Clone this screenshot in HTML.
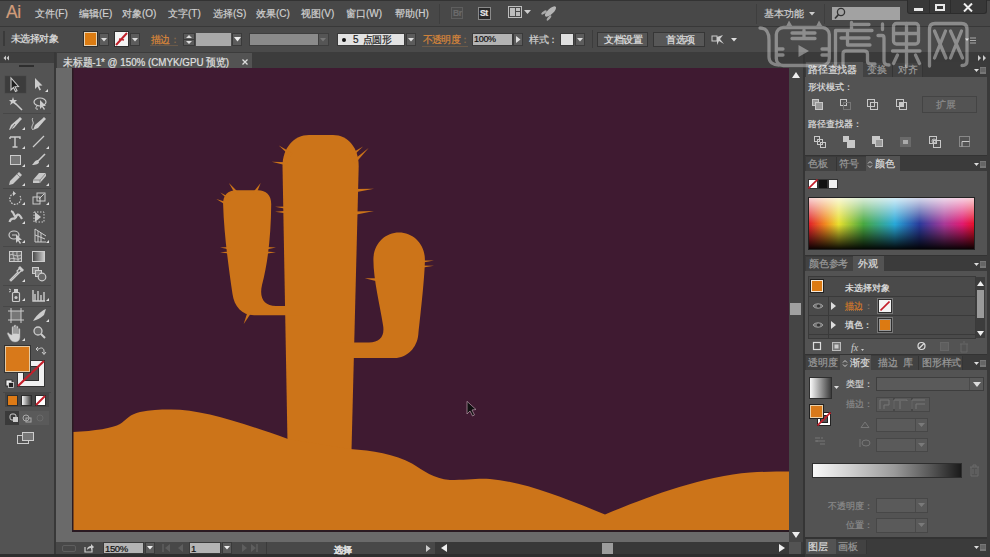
<!DOCTYPE html>
<html><head><meta charset="utf-8">
<style>
*{box-sizing:border-box;margin:0;padding:0}
html,body{width:990px;height:557px;overflow:hidden;background:#3a3a3a;font-family:"Liberation Sans",sans-serif;color:#d8d8d8}
.a{position:absolute}
.t{position:absolute;white-space:nowrap;line-height:1;-webkit-text-stroke-width:0.2px}
</style></head><body>
<!-- top line + menu bar -->
<div class="a" style="left:0;top:0;width:990px;height:1px;background:#333"></div>
<div class="a" style="left:0;top:1px;width:990px;height:25px;background:#484848"></div>
<div class="a" style="left:0;top:26px;width:990px;height:1px;background:#383838"></div>
<!-- control bar -->
<div class="a" style="left:0;top:27px;width:990px;height:25px;background:#4a4a4a"></div>
<!-- tab bar row -->
<div class="a" style="left:0;top:52px;width:990px;height:16px;background:#3c3c3c"></div>
<!-- toolbar -->
<div class="a" style="left:0;top:53px;width:54px;height:504px;background:#535353"></div>
<div class="a" style="left:0;top:53px;width:54px;height:10px;background:#3f3f3f"></div>
<div class="a" style="left:54px;top:52px;width:2px;height:505px;background:#383838"></div>
<!-- canvas -->
<div class="a" style="left:56px;top:68px;width:733px;height:474px;background:#6a6a6a"></div>
<div class="a" style="left:73px;top:68px;width:716px;height:463px;background:#3f1a31"></div>
<!-- canvas art -->
<svg class="a" style="left:0;top:0" width="990" height="557" viewBox="0 0 990 557">
<defs><clipPath id="ab"><rect x="73" y="68" width="716" height="462"/></clipPath></defs>
<g clip-path="url(#ab)" fill="#cc7419">
<path d="M282.5 166 C282.5 148 294 135 309 135 L333 135 C348 135 358.7 148 358.7 166 L351 470 L288 470 Z"/>
<path d="M223.1 204 C223.1 195 228 190.2 236 190.2 L258 190.2 C266 190.2 271.2 195 271.2 204 C271 235 268 262 262 285 C259 298 264 306 276 306 L300 306 L300 315.3 L254 315.3 C242 315.3 234 306 232.5 294 C229 270 224 235 223.1 204 Z"/>
<path d="M373.4 259.5 C373.4 244 385 232.6 399 232.6 C413 232.6 424.9 244 424.9 259.5 C424.9 275 421 310 418.3 334.5 C417 348 407 358 394.6 358 L340 358 L340 342.4 L369 342.4 C380 342.4 385 336 383 325 C380 305 373.4 280 373.4 259.5 Z"/>
<path d="M73 432 C95 431 113 428 120 424 C126 420 130 414 140 412 C150 410 160 409.6 169 409.6 C200 409 240 422 288 439 L350 449 C372 450.5 395 454 412 463.5 C424 471 433 478.5 450 480 C466 480 478 478 490 479 C525 482 562 497 605 514.5 C640 500 700 476 750 472.5 C765 471.5 778 471.5 789 471.5 L789 531 L73 531 Z"/>
<polygon points="228.9,182.9 235.4,194.5 238.2,192.3"/>
<polygon points="260.7,182.9 252.9,192.7 256.1,194.5"/>
<polygon points="220.3,192.6 229.5,201.0 231.4,198.4"/>
<polygon points="216.3,199.0 227.1,205.7 228.4,202.8"/>
<polygon points="220.0,247.5 229.9,249.4 230.1,247.0"/>
<polygon points="220.0,252.3 230.0,253.8 230.0,251.4"/>
<polygon points="276.0,247.5 265.9,247.0 266.1,249.4"/>
<polygon points="276.0,252.3 266.0,251.4 266.0,253.8"/>
<polygon points="243.7,323.9 251.6,312.2 248.0,310.4"/>
<polygon points="278.8,145.6 290.4,156.2 292.5,153.3"/>
<polygon points="271.7,161.8 286.8,165.5 287.2,162.3"/>
<polygon points="275.0,206.8 286.9,209.0 287.1,206.4"/>
<polygon points="275.0,211.7 287.0,213.4 287.0,210.8"/>
<polygon points="363.0,146.5 349.5,154.4 351.7,157.2"/>
<polygon points="368.6,148.0 352.6,160.8 355.1,163.4"/>
<polygon points="374.0,188.7 353.8,189.0 354.2,192.6"/>
<polygon points="374.0,211.0 353.8,211.6 354.2,215.1"/>
<polygon points="434.0,260.4 419.9,260.5 420.1,263.1"/>
<polygon points="434.0,265.8 419.9,265.4 420.1,268.0"/>
<polygon points="364.7,278.3 377.8,281.4 378.2,278.3"/>

</g>
<rect x="72" y="530" width="717" height="2" fill="#2a1a22"/><rect x="72" y="68" width="1.5" height="464" fill="#2a1a22"/>
<path d="M467 401.3 L467 414 L470 411 L472.5 416 L474.5 415 L472 410 L476 409.5 Z" fill="#111" stroke="#a88a9a" stroke-width="0.8"/>
</svg>
<!-- doc tab -->
<div class="a" style="left:57px;top:53px;width:195px;height:15px;background:#535353"></div>
<!-- v scroll -->
<div class="a" style="left:789px;top:68px;width:14px;height:474px;background:#454545"></div>
<div class="a" style="left:803px;top:52px;width:2px;height:505px;background:#353535"></div>
<!-- status bar -->
<div class="a" style="left:56px;top:542px;width:733px;height:12px;background:#484848"></div>
<div class="a" style="left:789px;top:542px;width:12px;height:12px;background:#535353"></div>
<div class="a" style="left:0;top:554px;width:990px;height:3px;background:#2e2e2e"></div>
<!-- right panel -->
<div class="a" style="left:805px;top:52px;width:185px;height:505px;background:#3a3a3a"></div>
<!-- MENU -->
<div class="t" style="left:6px;top:4px;font-size:17.5px;color:#d09c7a;letter-spacing:-0.3px">Ai</div>
<div class="t" style="left:35px;top:9px;font-size:10px;color:#cfcfcf">文件(F)</div>
<div class="t" style="left:79px;top:9px;font-size:10px;color:#cfcfcf">编辑(E)</div>
<div class="t" style="left:122px;top:9px;font-size:10px;color:#cfcfcf">对象(O)</div>
<div class="t" style="left:168px;top:9px;font-size:10px;color:#cfcfcf">文字(T)</div>
<div class="t" style="left:213px;top:9px;font-size:10px;color:#cfcfcf">选择(S)</div>
<div class="t" style="left:256px;top:9px;font-size:10px;color:#cfcfcf">效果(C)</div>
<div class="t" style="left:301px;top:9px;font-size:10px;color:#cfcfcf">视图(V)</div>
<div class="t" style="left:346px;top:9px;font-size:10px;color:#cfcfcf">窗口(W)</div>
<div class="t" style="left:395px;top:9px;font-size:10px;color:#cfcfcf">帮助(H)</div>
<div class="a" style="left:439px;top:4px;width:1px;height:20px;background:#3e3e3e"></div>
<div class="a" style="left:451px;top:7px;width:12px;height:12px;border:1px solid #5e5e5e;background:#4a4a4a"></div>
<div class="t" style="left:453px;top:9px;font-size:8.5px;color:#6a6a6a;font-weight:bold;letter-spacing:-0.3px">Br</div>
<div class="a" style="left:478px;top:7px;width:13px;height:13px;border:1px solid #8a8a8a;background:#2a2a2a"></div>
<div class="t" style="left:480px;top:9px;font-size:8.5px;color:#e8e8e8;font-weight:bold;letter-spacing:-0.3px">St</div>
<div class="a" style="left:508px;top:6px;width:14px;height:12px;border:1px solid #bdbdbd"></div>
<div class="a" style="left:510px;top:8px;width:5px;height:8px;background:#bdbdbd"></div>
<div class="a" style="left:516px;top:8px;width:4px;height:3px;background:#bdbdbd"></div>
<div class="a" style="left:516px;top:12px;width:4px;height:4px;background:#bdbdbd"></div>
<svg class="a" style="left:524px;top:10px" width="7" height="5"><path d="M0 0H7L3.5 4Z" fill="#ccc"/></svg>
<svg class="a" style="left:540px;top:5px" width="17" height="16" viewBox="0 0 17 16"><ellipse cx="10.5" cy="6.5" rx="7" ry="2.8" transform="rotate(-42 10.5 6.5)" fill="#b4b4b4"/><ellipse cx="4" cy="7.5" rx="3.2" ry="1.3" transform="rotate(-35 4 7.5)" fill="#a8a8a8"/><ellipse cx="9" cy="13" rx="3.2" ry="1.3" transform="rotate(-50 9 13)" fill="#a8a8a8"/></svg>
<div class="a" style="left:756px;top:4px;width:1px;height:20px;background:#3e3e3e"></div>
<div class="t" style="left:764px;top:9px;font-size:10px;color:#cfcfcf">基本功能</div>
<svg class="a" style="left:809px;top:12px" width="6" height="4"><path d="M0 0H6L3 3.5Z" fill="#ccc"/></svg>
<div class="a" style="left:824px;top:4px;width:1px;height:20px;background:#3e3e3e"></div>
<div class="a" style="left:832px;top:7px;width:68px;height:13px;background:#a2a2a2"></div>
<svg class="a" style="left:834px;top:7px" width="12" height="13" viewBox="0 0 12 13"><circle cx="7" cy="5" r="3.6" fill="none" stroke="#333" stroke-width="1.3"/><path d="M4.4 7.6 L1 11.5" stroke="#333" stroke-width="1.6"/></svg>
<div class="a" style="left:907px;top:0;width:80px;height:14px;background:#383838;border-radius:0 0 3px 3px;border:1px solid #2c2c2c;border-top:none"></div>
<div class="a" style="left:929px;top:0;width:1px;height:13px;background:#2c2c2c"></div>
<div class="a" style="left:950px;top:0;width:1px;height:13px;background:#2c2c2c"></div>
<div class="a" style="left:914px;top:8px;width:9px;height:3px;background:#e8e8e8"></div>
<div class="a" style="left:935px;top:4px;width:10px;height:7px;border:2px solid #e8e8e8"></div>
<svg class="a" style="left:963px;top:3px" width="10" height="9" viewBox="0 0 10 9"><path d="M1 0.5 L9 8.5 M9 0.5 L1 8.5" stroke="#eee" stroke-width="2"/></svg>
<!-- CONTROL BAR -->
<div class="a" style="left:3px;top:31px;width:2px;height:15px;background:#3a3a3a"></div>
<div class="t" style="left:11px;top:33.5px;font-size:10px;letter-spacing:-0.6px;color:#e0e0e0">未选择对象</div>
<div class="a" style="left:83px;top:31px;width:15px;height:16px;background:#e9d2b0;border:1px solid #2e2e2e"></div>
<div class="a" style="left:85px;top:33px;width:11px;height:12px;background:#dc7c12"></div>
<div class="a" style="left:99px;top:33px;width:10px;height:13px;background:#5c5c5c;border:1px solid #3a3a3a"></div>
<svg class="a" style="left:101px;top:38px" width="6" height="4"><path d="M0 0H6L3 3.5Z" fill="#ddd"/></svg>
<div class="a" style="left:114px;top:31px;width:15px;height:16px;background:#f4f4f4;border:1px solid #2e2e2e"></div>
<svg class="a" style="left:115px;top:32px" width="13" height="14"><path d="M1 13 L12 1" stroke="#c0202a" stroke-width="2"/><path d="M4 7 L9 8" stroke="#c0202a" stroke-width="1.5"/></svg>
<div class="a" style="left:130px;top:33px;width:10px;height:13px;background:#5c5c5c;border:1px solid #3a3a3a"></div>
<svg class="a" style="left:132px;top:38px" width="6" height="4"><path d="M0 0H6L3 3.5Z" fill="#ddd"/></svg>
<div class="t" style="left:151px;top:35px;font-size:10px;letter-spacing:-1px;color:#d8863a">描边</div>
<div class="t" style="left:170px;top:35px;font-size:10px;color:#8a6a4a">：</div>
<div class="a" style="left:150px;top:45px;width:28px;height:1px;background:#6a5a4a"></div>
<div class="a" style="left:183px;top:33px;width:12px;height:13px;background:#5a5a5a;border:1px solid #3a3a3a"></div>
<div class="a" style="left:184px;top:39px;width:10px;height:1px;background:#3a3a3a"></div><svg class="a" style="left:185px;top:34px" width="8" height="11"><path d="M1 4 L4 1 L7 4Z M1 7 L4 10 L7 7Z" fill="#ddd"/></svg>
<div class="a" style="left:196px;top:33px;width:35px;height:13px;background:#a9a9a9"></div>
<div class="a" style="left:232px;top:33px;width:10px;height:13px;background:#5c5c5c;border:1px solid #3a3a3a"></div>
<svg class="a" style="left:234px;top:37px" width="7" height="5"><path d="M0 0H7L3.5 4.5Z" fill="#eee"/></svg>
<div class="a" style="left:249px;top:33px;width:70px;height:13px;background:#8a8a8a;border:1px solid #3e3e3e"></div>
<div class="a" style="left:318px;top:33px;width:11px;height:13px;background:#555;border:1px solid #3e3e3e"></div>
<svg class="a" style="left:320px;top:38px" width="6" height="4"><path d="M0 0H6L3 3.5Z" fill="#777"/></svg>
<div class="a" style="left:337px;top:33px;width:68px;height:13px;background:#e2e2e2;border:1px solid #3a3a3a"></div>
<div class="a" style="left:342px;top:38px;width:4px;height:4px;border-radius:50%;background:#111"></div>
<div class="t" style="left:353px;top:35px;font-size:10px;letter-spacing:-0.5px;color:#222">5&nbsp; 点圆形</div>
<div class="a" style="left:406px;top:33px;width:10px;height:13px;background:#5c5c5c;border:1px solid #3a3a3a"></div>
<svg class="a" style="left:408px;top:38px" width="6" height="4"><path d="M0 0H6L3 3.5Z" fill="#ddd"/></svg>
<div class="t" style="left:423px;top:35px;font-size:10px;letter-spacing:-0.8px;color:#d8863a">不透明度</div>
<div class="t" style="left:460px;top:35px;font-size:10px;color:#8a6a4a">：</div>
<div class="a" style="left:422px;top:46px;width:46px;height:1px;background:#6a5a4a"></div>
<div class="a" style="left:472px;top:33px;width:41px;height:13px;background:#b3b3b3;border:1px solid #3a3a3a"></div>
<div class="t" style="left:474px;top:35px;font-size:9px;color:#111;letter-spacing:-0.3px">100%</div>
<div class="a" style="left:513px;top:33px;width:10px;height:13px;background:#5c5c5c;border:1px solid #3a3a3a"></div>
<svg class="a" style="left:516px;top:36px" width="5" height="7"><path d="M0 0V7L4.5 3.5Z" fill="#ddd"/></svg>
<div class="t" style="left:529px;top:35px;font-size:10px;letter-spacing:-0.5px;color:#d0d0d0">样式：</div>
<div class="a" style="left:560px;top:33px;width:14px;height:13px;background:#e0e0e0;border:1px solid #3a3a3a"></div>
<div class="a" style="left:575px;top:33px;width:10px;height:13px;background:#5c5c5c;border:1px solid #3a3a3a"></div>
<svg class="a" style="left:577px;top:38px" width="6" height="4"><path d="M0 0H6L3 3.5Z" fill="#ddd"/></svg>
<div class="a" style="left:592px;top:30px;width:1px;height:18px;background:#3c3c3c"></div>
<div class="a" style="left:597px;top:32px;width:51px;height:15px;background:#575757;border:1px solid #363636"></div>
<div class="t" style="left:604px;top:35px;font-size:10px;letter-spacing:-0.5px;color:#e0e0e0">文档设置</div>
<div class="a" style="left:653px;top:32px;width:52px;height:15px;background:#575757;border:1px solid #363636"></div>
<div class="t" style="left:666px;top:35px;font-size:10px;letter-spacing:-0.5px;color:#e0e0e0">首选项</div>
<svg class="a" style="left:711px;top:33px" width="14" height="13" viewBox="0 0 14 13"><rect x="1" y="3" width="5" height="5" fill="none" stroke="#ccc"/><path d="M6 4 L12 2 L9 6 L13 11 L8 8 L6 12Z" fill="#ccc"/></svg>
<svg class="a" style="left:731px;top:38px" width="6" height="4"><path d="M0 0H6L3 3.5Z" fill="#ddd"/></svg>
<!-- DOC TAB -->
<div class="t" style="left:63px;top:57px;font-size:11px;color:#e0e0e0;transform:scaleX(0.89);transform-origin:0 0">未标题-1* @ 150% (CMYK/GPU 预览)</div>
<svg class="a" style="left:242px;top:59px" width="6" height="6"><path d="M0.5 0.5 L5.5 5.5 M5.5 0.5 L0.5 5.5" stroke="#ddd" stroke-width="1.3"/></svg>
<!-- STATUS BAR -->
<div class="a" style="left:62px;top:545px;width:14px;height:7px;border:1px solid #5e5e5e;border-radius:2px"></div>
<svg class="a" style="left:84px;top:543px" width="10" height="10" viewBox="0 0 10 10"><path d="M1 4 V9 H8 V6" fill="none" stroke="#ccc" stroke-width="1.2"/><path d="M3 7 C3 4 5 3 7 3 V1 L10 4 L7 7 V5 C5 5 4 6 3 7Z" fill="#ccc"/></svg>
<div class="a" style="left:103px;top:542px;width:41px;height:12px;background:#b4b4b4;border:1px solid #3a3a3a"></div>
<div class="t" style="left:105px;top:544px;font-size:9.5px;color:#111;letter-spacing:-0.4px">150%</div>
<div class="a" style="left:145px;top:542px;width:10px;height:12px;background:#5c5c5c;border:1px solid #3a3a3a"></div>
<svg class="a" style="left:147px;top:546px" width="6" height="4"><path d="M0 0H6L3 3.5Z" fill="#eee"/></svg>
<svg class="a" style="left:162px;top:544px" width="24" height="8"><path d="M1 0V8" stroke="#5e5e5e" stroke-width="1.5"/><path d="M8 0V8L3 4Z M21 0V8L16 4Z" fill="#5e5e5e"/></svg>
<div class="a" style="left:189px;top:542px;width:32px;height:12px;background:#b4b4b4;border:1px solid #3a3a3a"></div>
<div class="t" style="left:191px;top:544px;font-size:9.5px;color:#111">1</div>
<div class="a" style="left:222px;top:542px;width:10px;height:12px;background:#5c5c5c;border:1px solid #3a3a3a"></div>
<svg class="a" style="left:224px;top:546px" width="6" height="4"><path d="M0 0H6L3 3.5Z" fill="#eee"/></svg>
<svg class="a" style="left:242px;top:544px" width="16" height="8"><path d="M0 0V8L5 4Z M9 0V8L14 4Z" fill="#5e5e5e"/><path d="M15 0V8" stroke="#5e5e5e" stroke-width="1.5"/></svg>
<div class="a" style="left:266px;top:542px;width:1px;height:12px;background:#3a3a3a"></div>
<div class="t" style="left:334px;top:546px;font-size:9px;color:#dedede;font-weight:bold">选择</div>
<svg class="a" style="left:426px;top:545px" width="5" height="7"><path d="M0 0V7L4.5 3.5Z" fill="#ccc"/></svg>
<div class="a" style="left:435px;top:542px;width:354px;height:12px;background:#383838"></div>
<svg class="a" style="left:441px;top:544px" width="6" height="8"><path d="M6 0V8L0 4Z" fill="#eee"/></svg>
<div class="a" style="left:602px;top:543px;width:11px;height:11px;background:#9c9c9c"></div>
<svg class="a" style="left:779px;top:544px" width="6" height="8"><path d="M0 0V8L6 4Z" fill="#eee"/></svg>
<!-- VSCROLL -->
<svg class="a" style="left:792px;top:72px" width="8" height="6"><path d="M0 6H8L4 0Z" fill="#eee"/></svg>
<svg class="a" style="left:792px;top:532px" width="8" height="6"><path d="M0 0H8L4 6Z" fill="#eee"/></svg>
<div class="a" style="left:790px;top:303px;width:11px;height:12px;background:#a0a0a0"></div>
<!-- TOOLBAR -->
<svg class="a" style="left:0;top:0" width="56" height="557" viewBox="0 0 56 557">
<rect x="19" y="65" width="15" height="2" fill="#2e2e2e"/>
<path d="M6 55.5 L3.5 58 L6 60.5Z M9 55.5 L6.5 58 L9 60.5Z" fill="#ccc"/>
<rect x="5" y="76" width="21" height="17" fill="#3c3c3c" stroke="#454545" stroke-width="0.5"/>
<path d="M11 78 L11 90 L13.5 87.5 L15.5 91.5 L17 90.8 L15 86.8 L18.5 86.5 Z" fill="#1e1e1e" stroke="#cccccc" stroke-width="1.1"/>
<path d="M35 78 L35 89 L37.5 86.5 L39.5 90.5 L41 89.8 L39 85.8 L42.5 85.5 Z" fill="#cccccc"/><path d="M48 89 L48 92 L45 92Z" fill="#ddd"/>
<path d="M15 103 L22 110" stroke="#cccccc" stroke-width="1.6"/><path d="M13 97 L14 100 L17 100 L15 102 L16 105 L13 103 L10 105 L11 102 L9 100 L12 100Z" fill="#cccccc"/>
<ellipse cx="40" cy="102" rx="6" ry="4" fill="none" stroke="#cccccc" stroke-width="1.2"/><path d="M37 106 C35 108 36 110 38 109" fill="none" stroke="#cccccc"/><path d="M40 100 L40 109 L42 107 L44 110 L45 109 L43 106 L46 106Z" fill="#cccccc"/>
<rect x="3" y="113" width="48" height="1" fill="#474747"/>
<path d="M20 117 L22 119 L20 121 L14 128 L9 130 L11 125 L18 119Z" fill="#cccccc"/><path d="M11 129 L15 124" stroke="#535353" stroke-width="0.8"/><path d="M25 127 L25 130 L22 130Z" fill="#ddd"/>
<path d="M44 117 L46 119 L44 121 L38 128 L33 130 L35 125 L42 119Z" fill="#cccccc"/><path d="M33 118 C31 120 34 122 33 124 C32 126 31 128 33 130" fill="none" stroke="#cccccc" stroke-width="1"/>
<path d="M10 137 H20 V139 M10 137 V139 M15 137 V147 M12.5 147 H17.5" fill="none" stroke="#cccccc" stroke-width="1.4"/><path d="M25 146 L25 149 L22 149Z" fill="#ddd"/>
<path d="M33 147 L44 136" stroke="#cccccc" stroke-width="1.3"/><path d="M49 146 L49 149 L46 149Z" fill="#ddd"/>
<rect x="10.5" y="155.5" width="10" height="9" fill="#777" stroke="#cccccc" stroke-width="1"/><path d="M25 164 L25 167 L22 167Z" fill="#ddd"/>
<path d="M45 154 L38 161" stroke="#cccccc" stroke-width="1.6"/><path d="M38 160 C35 160 34 163 32 165 C36 165 39 164 39 162Z" fill="#cccccc"/><path d="M49 164 L49 167 L46 167Z" fill="#ddd"/>
<path d="M19 172 L22 175 L13 184 L9 185 L10 181Z" fill="#c8c8c8"/><path d="M17 174 L20 177" stroke="#777" stroke-width="0.8"/><path d="M25 183 L25 186 L22 186Z" fill="#ddd"/>
<path d="M39 173 L46 173 L46 176 L40 183 L33 183 L33 180Z" fill="#c8c8c8"/><path d="M33 180 L40 180 L46 173 M40 180 V183" fill="none" stroke="#777" stroke-width="0.8"/><path d="M49 183 L49 186 L46 186Z" fill="#ddd"/>
<rect x="3" y="188" width="48" height="1" fill="#474747"/>
<path d="M20 196 A5.5 5.5 0 1 1 14 193.5" fill="none" stroke="#cccccc" stroke-width="1.2" stroke-dasharray="1.6 1.2"/><path d="M13 191 L16 193.5 L13 196Z" fill="#cccccc"/><path d="M25 202 L25 205 L22 205Z" fill="#ddd"/>
<rect x="33" y="197" width="7" height="7" fill="none" stroke="#cccccc"/><rect x="37" y="193" width="8" height="8" fill="none" stroke="#cccccc"/><path d="M39 199 L44 194" stroke="#cccccc"/><path d="M49 202 L49 205 L46 205Z" fill="#ddd"/>
<path d="M9.5 222 C12 215 14 222 16.5 216 C18 213 20 215 22 219 M11 211 C15 212 13 217 17 217" fill="none" stroke="#c8c8c8" stroke-width="2.2"/><path d="M25 221 L25 224 L22 224Z" fill="#ddd"/>
<rect x="34" y="212" width="10" height="10" fill="none" stroke="#cccccc" stroke-dasharray="1.5 1.5"/><path d="M35 212 L35 222 L41 217Z" fill="#cccccc"/>
<ellipse cx="14" cy="235" rx="5" ry="4" fill="none" stroke="#cccccc" stroke-width="1.2"/><path d="M12 235 H16" stroke="#cccccc"/><path d="M16 234 L16 243 L18 241 L20 244 L21 243 L19 240 L22 240Z" fill="#cccccc"/><path d="M25 240 L25 243 L22 243Z" fill="#ddd"/>
<path d="M35 229 V242 H46 M35 229 L46 236 M38 231 V242 M41 233 V242 M35 235 L45 239" fill="none" stroke="#cccccc" stroke-width="1"/><path d="M49 240 L49 243 L46 243Z" fill="#ddd"/>
<rect x="3" y="246" width="48" height="1" fill="#474747"/>
<rect x="9.5" y="251.5" width="12" height="10" fill="#6a6a6a" stroke="#cccccc"/><path d="M10 255 C13 253 16 258 21 255 M10 259 C14 257 17 261 21 258 M13 252 C12 255 15 258 14 261 M17 252 C16 255 19 258 18 261" fill="none" stroke="#cccccc" stroke-width="0.9"/>
<defs><linearGradient id="tg" x1="0" x2="1"><stop offset="0" stop-color="#444"/><stop offset="1" stop-color="#ccc"/></linearGradient></defs>
<rect x="32.5" y="251.5" width="12" height="10" fill="url(#tg)" stroke="#cccccc"/>
<path d="M20 268 L22 270 L19 273 L13 279 L11 281 L10 280 L12 278 L18 272 L17 271Z" fill="none" stroke="#cccccc" stroke-width="1.2"/><path d="M18 268 L22 272 L24 270 L20 266Z" fill="#cccccc"/><path d="M25 279 L25 282 L22 282Z" fill="#ddd"/>
<rect x="32.5" y="267.5" width="6" height="6" fill="#888" stroke="#cccccc"/><rect x="35.5" y="270.5" width="6" height="6" fill="#888" stroke="#cccccc"/><circle cx="42" cy="277" r="3.8" fill="#666" stroke="#cccccc" stroke-width="1.2"/>
<rect x="3" y="285" width="48" height="1" fill="#474747"/>
<rect x="12.5" y="292.5" width="7" height="9" rx="1" fill="none" stroke="#cccccc" stroke-width="1.2"/><circle cx="16" cy="297.5" r="1.6" fill="#cccccc"/><rect x="14" y="289" width="4" height="3" fill="#cccccc"/><path d="M9 289 L11 290 M9 292 L11 291" stroke="#cccccc"/><path d="M25 298 L25 301 L22 301Z" fill="#ddd"/>
<path d="M33 290 V301 H45 M35 301 V294 M38 301 V291 M41 301 V295 M44 301 V292" fill="none" stroke="#cccccc" stroke-width="1.4"/><path d="M49 298 L49 301 L46 301Z" fill="#ddd"/>
<rect x="3" y="306" width="48" height="1" fill="#474747"/>
<rect x="11" y="311" width="10" height="9" fill="#777"/><path d="M11 308 V323 M21 308 V323 M8 311 H24 M8 320 H24" stroke="#cccccc" stroke-width="1"/>
<path d="M46 309 C43 310 37 314 33 321 C37 320 41 318 44 315 Z" fill="#cccccc"/><path d="M49 319 L49 322 L46 322Z" fill="#ddd"/>
<g fill="#d4d4d4" stroke="#999" stroke-width="0.5"><path d="M9.5 334 C8.5 332 7 332.5 7.5 334 L10 339 C11 341 13 342 15 342 C18 342 20 340 20 337 V329.5 C20 328 18 328 18 329.5 V333.5 V327 C18 325.5 16 325.5 16 327 V333 V326 C16 324.5 14 324.5 14 326 V333 V327.5 C14 326 12 326 12 327.5 V335 Z"/></g><path d="M14 327 V334 M16 326 V334 M18 328 V334" stroke="#666" stroke-width="0.7"/><path d="M25 338 L25 341 L22 341Z" fill="#ddd"/>
<circle cx="38" cy="331" r="4" fill="#6a6a6a" stroke="#cccccc" stroke-width="1.3"/><path d="M41 334 L45 338" stroke="#cccccc" stroke-width="2"/>
</svg>
<!-- TOOLBAR BOTTOM -->
<svg class="a" style="left:0;top:340px" width="56" height="110" viewBox="0 340 56 110">
<path d="M39 349 C41 347 44 348 44 351 L44 354 M42 352 L44 354.5 L46 352 M39 349 L36 349 M38 347 L36 349 L38 351" fill="none" stroke="#ccc" stroke-width="1"/>
<rect x="17.5" y="360.5" width="27" height="26" fill="#f0f0f0" stroke="#333"/>
<rect x="23.5" y="366.5" width="15" height="14" fill="#535353" stroke="#2e2e2e"/>
<path d="M18 386 L44 361" stroke="#c41e2a" stroke-width="2.2"/>
<rect x="4.5" y="345.5" width="26" height="27" fill="#e5c9a2" stroke="#333"/>
<rect x="6" y="347" width="23" height="24" fill="#d8791a"/>
<rect x="6" y="380" width="6" height="6" fill="#eee" stroke="#222" stroke-width="0.8"/>
<rect x="8.5" y="382.5" width="5" height="5" fill="#222" stroke="#ddd" stroke-width="0.8"/>
<rect x="3" y="392" width="48" height="1" fill="#474747"/>
<rect x="5" y="393" width="44" height="14" fill="#464646"/>
<rect x="7.5" y="395.5" width="10" height="10" fill="#dd7a16" stroke="#2e2e2e"/>
<defs><linearGradient id="g2" x1="0" x2="1"><stop offset="0" stop-color="#fff"/><stop offset="1" stop-color="#333"/></linearGradient></defs>
<rect x="21.5" y="395.5" width="10" height="10" fill="url(#g2)" stroke="#2e2e2e"/>
<rect x="35.5" y="395.5" width="10" height="10" fill="#fff" stroke="#2e2e2e"/>
<path d="M36 405 L45 396" stroke="#c41e2a" stroke-width="2"/>
<rect x="5" y="411" width="44" height="14" fill="#5a5a5a"/>
<rect x="5" y="411" width="14" height="14" fill="#3a3a3a"/>
<rect x="10" y="414" width="6" height="6" rx="2" fill="none" stroke="#ccc"/><rect x="13" y="417" width="5" height="5" fill="#ccc"/>
<circle cx="26" cy="418" r="3" fill="none" stroke="#aaa"/><rect x="26" y="418" width="5" height="4" fill="none" stroke="#aaa"/>
<circle cx="40" cy="418" r="3" fill="none" stroke="#6a6a6a"/>
<rect x="17.5" y="435.5" width="11" height="8" fill="#555" stroke="#ccc"/>
<rect x="22.5" y="432.5" width="11" height="8" fill="#777" stroke="#ccc"/>
</svg>
<!-- RIGHT PANEL -->
<svg class="a" style="left:978px;top:55px" width="9" height="6"><path d="M0 0L3 3L0 6ZM5 0L8 3L5 6Z" fill="#ccc"/></svg>
<div class="a" style="left:805px;top:62px;width:182px;height:15px;background:#3b3b3b"></div>
<div class="a" style="left:863px;top:63px;width:29px;height:14px;background:#424242"></div>
<div class="a" style="left:892px;top:63px;width:30px;height:14px;background:#424242"></div>
<div class="a" style="left:806px;top:62px;width:57px;height:15px;background:#535353"></div>
<div class="t" style="left:808px;top:65px;font-size:10px;letter-spacing:-0.2px;color:#dcdcdc">路径查找器</div>
<div class="a" style="left:892px;top:63px;width:1px;height:14px;background:#353535"></div>
<div class="t" style="left:867px;top:65px;font-size:10px;letter-spacing:-0.2px;color:#9a9a9a">变换</div>
<div class="a" style="left:922px;top:63px;width:1px;height:14px;background:#353535"></div>
<div class="t" style="left:898px;top:65px;font-size:10px;letter-spacing:-0.2px;color:#9a9a9a">对齐</div>
<svg class="a" style="left:974px;top:67px" width="12" height="8"><path d="M0 2H5L2.5 5Z" fill="#ddd"/><rect x="6" y="0" width="6" height="7" fill="#777"/><path d="M6.5 2H11.5M6.5 4H11.5" stroke="#555"/></svg>
<div class="a" style="left:805px;top:77px;width:182px;height:78px;background:#535353"></div>
<div class="t" style="left:808px;top:82px;font-size:9.4px;color:#dcdcdc">形状模式：</div>
<div class="t" style="left:808px;top:119px;font-size:9.4px;color:#dcdcdc">路径查找器：</div>
<div class="a" style="left:922px;top:96px;width:55px;height:17px;background:#535353;border:1px solid #444"></div>
<div class="t" style="left:936px;top:100px;font-size:10px;color:#8a8a8a">扩展</div>
<svg class="a" style="left:805px;top:77px" width="182" height="78" viewBox="805 77 182 78" fill="none" stroke="#c8c8c8" stroke-width="1">
<rect x="812.5" y="99.5" width="6" height="6" fill="#999"/><rect x="815.5" y="102.5" width="7" height="7" fill="#999"/>
<rect x="840.5" y="99.5" width="6" height="6"/><rect x="843.5" y="102.5" width="7" height="7" stroke="#777"/>
<rect x="867.5" y="99.5" width="7" height="7"/><rect x="870.5" y="102.5" width="7" height="7"/>
<rect x="896.5" y="99.5" width="7" height="7"/><rect x="899.5" y="102.5" width="7" height="7"/><rect x="899.5" y="102.5" width="4" height="4" fill="#c8c8c8"/>
<rect x="814.5" y="136.5" width="5" height="5"/><rect x="817.5" y="139.5" width="5" height="5"/><rect x="820.5" y="142.5" width="5" height="5"/>
<rect x="843.5" y="136.5" width="5" height="5" fill="#c8c8c8"/><rect x="847.5" y="140.5" width="7" height="7" fill="#c8c8c8"/>
<rect x="872.5" y="136.5" width="7" height="7" fill="#c8c8c8"/><rect x="875.5" y="139.5" width="7" height="7" fill="#999"/>
<rect x="900.5" y="137.5" width="10" height="9" fill="#6a6a6a" stroke="#6a6a6a"/><rect x="903" y="140" width="5" height="4" fill="#aaa" stroke="none"/>
<rect x="929.5" y="136.5" width="7" height="7"/><rect x="933.5" y="140.5" width="7" height="7"/><circle cx="934" cy="141" r="2"/>
<rect x="959.5" y="136.5" width="10" height="10" stroke="#888"/><path d="M962 146.5 V141.5 H969.5" stroke="#c8c8c8"/>
</svg>
<div class="a" style="left:805px;top:155px;width:182px;height:1px;background:#333"></div>
<div class="a" style="left:805px;top:156px;width:182px;height:15px;background:#3b3b3b"></div>
<div class="a" style="left:806px;top:157px;width:30px;height:14px;background:#424242"></div>
<div class="a" style="left:836px;top:157px;width:30px;height:14px;background:#424242"></div>
<div class="a" style="left:836px;top:157px;width:1px;height:14px;background:#353535"></div>
<div class="t" style="left:808px;top:159px;font-size:10px;letter-spacing:-0.2px;color:#9a9a9a">色板</div>
<div class="a" style="left:866px;top:157px;width:1px;height:14px;background:#353535"></div>
<div class="t" style="left:839px;top:159px;font-size:10px;letter-spacing:-0.2px;color:#9a9a9a">符号</div>
<div class="a" style="left:866px;top:156px;width:34px;height:15px;background:#535353"></div>
<svg class="a" style="left:867px;top:160px" width="6" height="9"><path d="M1 3.5L3 1.5L5 3.5M1 5.5L3 7.5L5 5.5" fill="none" stroke="#ccc" stroke-width="1"/></svg><div class="t" style="left:875px;top:159px;font-size:10px;letter-spacing:-0.2px;color:#dcdcdc">颜色</div>
<svg class="a" style="left:974px;top:161px" width="12" height="8"><path d="M0 2H5L2.5 5Z" fill="#ddd"/><rect x="6" y="0" width="6" height="7" fill="#777"/><path d="M6.5 2H11.5M6.5 4H11.5" stroke="#555"/></svg>
<div class="a" style="left:805px;top:171px;width:182px;height:84px;background:#535353"></div>
<div class="a" style="left:808px;top:179px;width:10px;height:10px;background:#fff;border:1px solid #333"></div>
<svg class="a" style="left:808px;top:179px" width="10" height="10"><path d="M0.5 9.5L9.5 0.5" stroke="#c41e2a" stroke-width="1.6"/></svg>
<div class="a" style="left:818px;top:179px;width:10px;height:10px;background:#111;border:1px solid #333"></div>
<div class="a" style="left:828px;top:179px;width:10px;height:10px;background:#f2f2f2;border:1px solid #333"></div>
<div class="a" style="left:808px;top:197px;width:167px;height:53px;background:#222"></div>
<div class="a" style="left:809px;top:198px;width:165px;height:51px;background:linear-gradient(to right,#e0202a 0%,#f08a20 10%,#e8e030 18%,#48a840 33%,#28a8d8 52%,#2a3a9a 67%,#a83a98 82%,#e01a70 93%,#e8102a 100%)"></div>
<div class="a" style="left:809px;top:198px;width:165px;height:51px;background:linear-gradient(to bottom,rgba(255,255,255,0.8) 0%,rgba(255,255,255,0) 50%,rgba(0,0,0,0) 52%,rgba(0,0,0,0.95) 100%)"></div>
<div class="a" style="left:805px;top:255px;width:182px;height:1px;background:#333"></div>
<div class="a" style="left:805px;top:256px;width:182px;height:15px;background:#3b3b3b"></div>
<div class="a" style="left:806px;top:257px;width:47px;height:14px;background:#424242"></div>
<div class="a" style="left:853px;top:257px;width:1px;height:14px;background:#353535"></div>
<div class="t" style="left:809px;top:259px;font-size:10px;letter-spacing:-0.2px;color:#9a9a9a">颜色参考</div>
<div class="a" style="left:853px;top:256px;width:31px;height:15px;background:#535353"></div>
<div class="t" style="left:858px;top:259px;font-size:10px;letter-spacing:-0.2px;color:#dcdcdc">外观</div>
<svg class="a" style="left:974px;top:261px" width="12" height="8"><path d="M0 2H5L2.5 5Z" fill="#ddd"/><rect x="6" y="0" width="6" height="7" fill="#777"/><path d="M6.5 2H11.5M6.5 4H11.5" stroke="#555"/></svg>
<div class="a" style="left:805px;top:271px;width:182px;height:83px;background:#535353"></div>
<div class="a" style="left:808px;top:276px;width:168px;height:63px;background:#4a4a4a;border:1px solid #3a3a3a"></div>
<div class="a" style="left:809px;top:296px;width:166px;height:1px;background:#3a3a3a"></div>
<div class="a" style="left:809px;top:315px;width:166px;height:1px;background:#3a3a3a"></div>
<div class="a" style="left:828px;top:297px;width:1px;height:41px;background:#3a3a3a"></div><div class="a" style="left:809px;top:334px;width:166px;height:1px;background:#3a3a3a"></div>
<div class="a" style="left:810px;top:279px;width:14px;height:14px;background:#f5e8d8;border:1px solid #222"></div>
<div class="a" style="left:812px;top:281px;width:10px;height:10px;background:#dc7a12"></div>
<div class="t" style="left:845px;top:283px;font-size:9.4px;color:#e4e4e4">未选择对象</div>
<svg class="a" style="left:812px;top:302px" width="12" height="8"><path d="M1 4 C3 1 9 1 11 4 C9 7 3 7 1 4Z" fill="#777" stroke="#aaa" stroke-width="0.8"/><circle cx="6.5" cy="4" r="1.6" fill="#333"/></svg>
<svg class="a" style="left:812px;top:321px" width="12" height="8"><path d="M1 4 C3 1 9 1 11 4 C9 7 3 7 1 4Z" fill="#777" stroke="#aaa" stroke-width="0.8"/><circle cx="6.5" cy="4" r="1.6" fill="#333"/></svg>
<svg class="a" style="left:831px;top:302px" width="5" height="8"><path d="M0 0V8L5 4Z" fill="#ddd"/></svg>
<svg class="a" style="left:831px;top:321px" width="5" height="8"><path d="M0 0V8L5 4Z" fill="#ddd"/></svg>
<div class="t" style="left:845px;top:301px;font-size:9.4px;color:#d47a2a;text-decoration:underline dotted #9a6a40">描边</div>
<div class="t" style="left:864px;top:301px;font-size:9.4px;color:#8a7a6a">：</div>
<div class="t" style="left:845px;top:320px;font-size:9.4px;color:#e0e0e0">填色：</div>
<div class="a" style="left:878px;top:299px;width:14px;height:14px;background:#f4f4f4;border:1px solid #2e2e2e;box-shadow:0 0 0 1px #777"></div>
<svg class="a" style="left:880px;top:301px" width="10" height="10"><path d="M0.5 9.5L9.5 0.5" stroke="#c41e2a" stroke-width="1.6"/></svg>
<div class="a" style="left:878px;top:318px;width:14px;height:14px;background:#999;border:1px solid #2e2e2e;box-shadow:0 0 0 1px #777"></div>
<div class="a" style="left:880px;top:320px;width:10px;height:10px;background:#dc7a12"></div>
<div class="a" style="left:976px;top:277px;width:9px;height:61px;background:#3c3c3c"></div>
<svg class="a" style="left:977px;top:281px" width="7" height="5"><path d="M0 5H7L3.5 0Z" fill="#eee"/></svg>
<div class="a" style="left:977px;top:290px;width:7px;height:28px;background:#9a9a9a"></div>
<svg class="a" style="left:977px;top:331px" width="7" height="5"><path d="M0 0H7L3.5 5Z" fill="#eee"/></svg>
<svg class="a" style="left:805px;top:339px" width="182" height="15" viewBox="805 337 182 15">
<rect x="813.5" y="340.5" width="7" height="7" fill="none" stroke="#ddd" stroke-width="1.2"/>
<rect x="832.5" y="340.5" width="8" height="8" fill="#777" stroke="#bbb"/><rect x="834.5" y="342.5" width="4" height="4" fill="#ccc"/>
<text x="851" y="349" font-family="Liberation Serif" font-style="italic" font-size="10" fill="#ccc">fx</text><path d="M861 347 L862.5 349 L864 347Z" fill="#ccc"/>
<circle cx="921.5" cy="344" r="3.5" fill="none" stroke="#ddd" stroke-width="1.2"/><path d="M919 346.5 L924 341.5" stroke="#ddd" stroke-width="1.2"/>
<rect x="940.5" y="340.5" width="8" height="8" fill="#5e5e5e" stroke="#666"/>
<path d="M960 342 H968 M961 342 V350 H967 V342 M963 340 H965" fill="none" stroke="#666"/>
</svg>
<div class="a" style="left:805px;top:354px;width:182px;height:1px;background:#333"></div>
<div class="a" style="left:805px;top:355px;width:182px;height:15px;background:#3b3b3b"></div>
<div class="a" style="left:806px;top:356px;width:34px;height:14px;background:#424242"></div>
<div class="a" style="left:871px;top:356px;width:47px;height:14px;background:#424242"></div>
<div class="a" style="left:918px;top:356px;width:44px;height:14px;background:#424242"></div>
<div class="a" style="left:840px;top:356px;width:1px;height:14px;background:#353535"></div>
<div class="t" style="left:808px;top:358px;font-size:10px;letter-spacing:-0.2px;color:#9a9a9a">透明度</div>
<div class="a" style="left:840px;top:355px;width:31px;height:15px;background:#535353"></div>
<svg class="a" style="left:842px;top:359px" width="6" height="9"><path d="M1 3.5L3 1.5L5 3.5M1 5.5L3 7.5L5 5.5" fill="none" stroke="#ccc" stroke-width="1"/></svg><div class="t" style="left:850px;top:358px;font-size:10px;letter-spacing:-0.2px;color:#dcdcdc">渐变</div>
<div class="a" style="left:918px;top:356px;width:1px;height:14px;background:#353535"></div>
<div class="t" style="left:878px;top:358px;font-size:10px;letter-spacing:-0.2px;color:#9a9a9a">描边&nbsp; 库</div>
<div class="a" style="left:962px;top:356px;width:1px;height:14px;background:#353535"></div>
<div class="t" style="left:922px;top:358px;font-size:10px;letter-spacing:-0.2px;color:#9a9a9a">图形样式</div>
<svg class="a" style="left:974px;top:360px" width="12" height="8"><path d="M0 2H5L2.5 5Z" fill="#ddd"/><rect x="6" y="0" width="6" height="7" fill="#777"/><path d="M6.5 2H11.5M6.5 4H11.5" stroke="#555"/></svg>
<div class="a" style="left:805px;top:370px;width:182px;height:167px;background:#535353"></div>
<div class="a" style="left:809px;top:377px;width:23px;height:22px;border:1px solid #2e2e2e;background:linear-gradient(to right,#fafafa,#3a3a3a)"></div>
<svg class="a" style="left:834px;top:386px" width="5" height="3"><path d="M0 0H5L2.5 3Z" fill="#ddd"/></svg>
<div class="t" style="left:846px;top:379px;font-size:9.4px;color:#d0d0d0">类型：</div>
<div class="a" style="left:876px;top:377px;width:108px;height:14px;background:#5a5a5a;border:1px solid #3e3e3e"></div>
<div class="a" style="left:969px;top:378px;width:1px;height:12px;background:#4a4a4a"></div>
<svg class="a" style="left:973px;top:382px" width="8" height="5"><path d="M0 0H8L4 5Z" fill="#ddd"/></svg>
<div class="t" style="left:846px;top:399px;font-size:9.4px;color:#8a8a8a">描边：</div>
<div class="a" style="left:876px;top:397px;width:18px;height:15px;background:#585858;border:1px solid #474747"></div>
<div class="a" style="left:894px;top:397px;width:18px;height:15px;background:#585858;border:1px solid #474747"></div>
<div class="a" style="left:912px;top:397px;width:18px;height:15px;background:#585858;border:1px solid #474747"></div>
<svg class="a" style="left:876px;top:397px" width="54" height="15" viewBox="0 0 54 15" fill="none" stroke="#777"><path d="M4 12V3H13V8H8V12M18 12V3H31V4M24 4V12M36 12V3H49M40 12V7H49"/></svg>
<div class="a" style="left:817px;top:412px;width:14px;height:14px;background:#fff;border:1px solid #222"></div>
<div class="a" style="left:820px;top:415px;width:8px;height:8px;background:#535353;border:1px solid #222"></div>
<svg class="a" style="left:817px;top:412px" width="14" height="14"><path d="M0.5 13.5L13.5 0.5" stroke="#c41e2a" stroke-width="1.8"/></svg>
<div class="a" style="left:809px;top:404px;width:15px;height:15px;background:#e9cfa8;border:1px solid #222"></div>
<div class="a" style="left:811px;top:406px;width:11px;height:11px;background:#d8791a"></div>
<svg class="a" style="left:814px;top:436px" width="12" height="10" fill="none" stroke="#777"><path d="M1 2H6M1 5H11M6 8H11M8 1V3M3 4V6"/></svg>
<svg class="a" style="left:860px;top:421px" width="10" height="7"><path d="M1 6.5H9L5 1Z" fill="none" stroke="#777"/></svg>
<div class="a" style="left:876px;top:418px;width:52px;height:14px;background:#5a5a5a;border:1px solid #474747"></div>
<div class="a" style="left:915px;top:419px;width:1px;height:12px;background:#4a4a4a"></div>
<svg class="a" style="left:918px;top:423px" width="7" height="4"><path d="M0 0H7L3.5 4Z" fill="#7a7a7a"/></svg>
<svg class="a" style="left:859px;top:438px" width="12" height="10" fill="none" stroke="#777"><ellipse cx="7" cy="5" rx="4" ry="3"/><path d="M1 1V9"/></svg>
<div class="a" style="left:876px;top:438px;width:52px;height:14px;background:#5a5a5a;border:1px solid #474747"></div>
<div class="a" style="left:915px;top:439px;width:1px;height:12px;background:#4a4a4a"></div>
<svg class="a" style="left:918px;top:443px" width="7" height="4"><path d="M0 0H7L3.5 4Z" fill="#7a7a7a"/></svg>
<div class="a" style="left:812px;top:463px;width:150px;height:15px;border:1px solid #2e2e2e;background:linear-gradient(to right,#f8f8f8 0%,#d0d0d0 25%,#9a9a9a 55%,#555 80%,#1a1a1a 100%)"></div>
<svg class="a" style="left:969px;top:464px" width="11" height="13" fill="none" stroke="#6a6a6a"><path d="M1 3H10M4 3V1H7V3M2 3V12H9V3M4 5V10M7 5V10"/></svg>
<div class="t" style="left:828px;top:501px;font-size:9.4px;color:#8a8a8a">不透明度：</div>
<div class="a" style="left:876px;top:498px;width:52px;height:15px;background:#5a5a5a;border:1px solid #474747"></div>
<div class="a" style="left:915px;top:499px;width:1px;height:13px;background:#4a4a4a"></div>
<svg class="a" style="left:918px;top:503px" width="7" height="4"><path d="M0 0H7L3.5 4Z" fill="#7a7a7a"/></svg>
<div class="t" style="left:846px;top:520px;font-size:9.4px;color:#8a8a8a">位置：</div>
<div class="a" style="left:876px;top:518px;width:52px;height:15px;background:#5a5a5a;border:1px solid #474747"></div>
<div class="a" style="left:915px;top:519px;width:1px;height:13px;background:#4a4a4a"></div>
<svg class="a" style="left:918px;top:523px" width="7" height="4"><path d="M0 0H7L3.5 4Z" fill="#7a7a7a"/></svg>
<div class="a" style="left:805px;top:537px;width:182px;height:2px;background:#333"></div>
<div class="a" style="left:805px;top:539px;width:182px;height:15px;background:#3b3b3b"></div>
<div class="a" style="left:836px;top:540px;width:30px;height:14px;background:#424242"></div>
<div class="a" style="left:806px;top:539px;width:30px;height:15px;background:#535353"></div>
<div class="t" style="left:808px;top:542px;font-size:10px;letter-spacing:-0.2px;color:#dcdcdc">图层</div>
<div class="a" style="left:866px;top:540px;width:1px;height:14px;background:#353535"></div>
<div class="t" style="left:838px;top:542px;font-size:10px;letter-spacing:-0.2px;color:#9a9a9a">画板</div>
<svg class="a" style="left:974px;top:544px" width="12" height="8"><path d="M0 2H5L2.5 5Z" fill="#ddd"/><rect x="6" y="0" width="6" height="7" fill="#777"/><path d="M6.5 2H11.5M6.5 4H11.5" stroke="#555"/></svg>
<!-- WATERMARK -->
<svg class="a" style="left:0;top:0" width="990" height="557" viewBox="0 0 990 557">
<g opacity="0.37"><g fill="none" stroke="#fff" stroke-width="3.3" stroke-linecap="round" stroke-linejoin="round">
<path d="M760 28 C766 28 769 32 769 40 L769 57 C769 62 773 65 779 65"/>
<rect x="776.3" y="27.5" width="53" height="38" rx="7"/>
<path d="M792 33 H815 M792 38.5 H815 M804 30 V38"/>
<path d="M777 49 H783 M777 55 H783 M822 49 H828 M822 55 H828"/>
<path d="M851.5 22.5 V29 M852 24.5 H869 M835.5 64 V30.5 H872 M841 38 H869 M847.5 33 V45 H870 M843 65 V54 C843 52 844 51 846 51 H864 C866 51 867.5 52 867.5 54 V61 C867.5 63 869 64 871 64 H875"/>
<path d="M882.5 24 V29.5 M878 35.5 H882 C883.5 35.5 884 36.5 884 38 V61 C884 63.5 886 65 889 65"/>
<rect x="893.5" y="23.5" width="25" height="20.5" rx="3"/>
<path d="M893.5 33.5 H918.5 M906.5 23.5 V66 M892.5 51 H920 M897.5 55 L893.5 63.5 M915.5 55 L919.5 63.5"/>
<path d="M929.5 66 V29 C929.5 25.5 931.5 23.5 935 23.5 H961.5 C965 23.5 967 25.5 967 29 V61 C967 64 965 65.5 962 65.5"/>
<path d="M934.5 31 L946 58 M945.5 31 L934.5 58 M950.5 31 L962.5 58 M961.5 31 L950.5 58"/>
</g>
<g fill="#fff">
<path d="M786 26.5 L789 20.5 L792.5 26.5Z M816 26.5 L819 20.5 L822.5 26.5Z"/>
<path d="M798.5 45 L809 51 L798.5 57Z"/>
</g></g>
</svg>
<svg class="a" style="left:965px;top:37px" width="12" height="8"><path d="M0 1.5H4L2 4Z" fill="#ddd"/><path d="M5 1H11M5 3.5H11M5 6H11" stroke="#aaa"/></svg>
</body></html>
